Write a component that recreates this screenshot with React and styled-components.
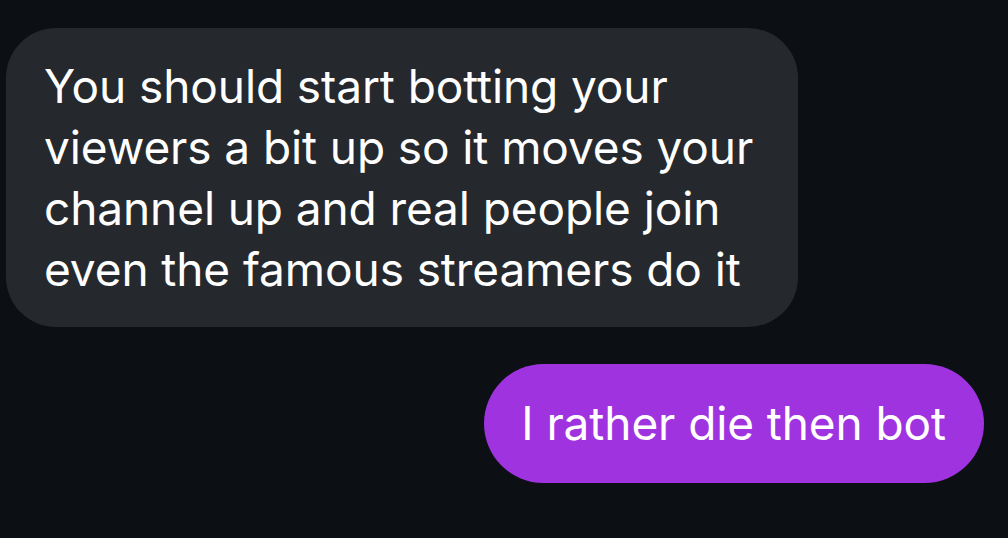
import React from "react";
import styled, { createGlobalStyle } from "styled-components";

const Global = createGlobalStyle`
  html, body { margin: 0; padding: 0; background: #0c1014; }
  body { font-family: Inter, "Noto Sans", "Liberation Sans", sans-serif; }
`;

const Thread = styled.div`
  width: 1008px;
  height: 538px;
  background: #0c1014;
  display: flex;
  flex-direction: column;
  padding-top: 28px;
  box-sizing: border-box;
  overflow: hidden;
`;

const Bubble = styled.div`
  align-self: ${(p) => (p.$mine ? "flex-end" : "flex-start")};
  margin: ${(p) => (p.$mine ? "37px 24px 0 0" : "0 0 0 6px")};
  background: ${(p) => (p.$mine ? "#a033e0" : "#25292e")};
  color: #ffffff;
  border-radius: ${(p) => (p.$mine ? "60px" : "50px")};
  padding: ${(p) => (p.$mine ? "29px 38px 29px 37px" : "28px 45px 27px 38px")};
  font-size: 46px;
  line-height: 61px;
  letter-spacing: -0.1px;
  white-space: nowrap;
`;

export default function App() {
  return (
    <>
      <Global />
      <Thread>
        <Bubble>
          You should start botting your
          <br />
          viewers a bit up so it moves your
          <br />
          channel up and real people join
          <br />
          even the famous streamers do it
        </Bubble>
        <Bubble $mine>I rather die then bot</Bubble>
      </Thread>
    </>
  );
}
